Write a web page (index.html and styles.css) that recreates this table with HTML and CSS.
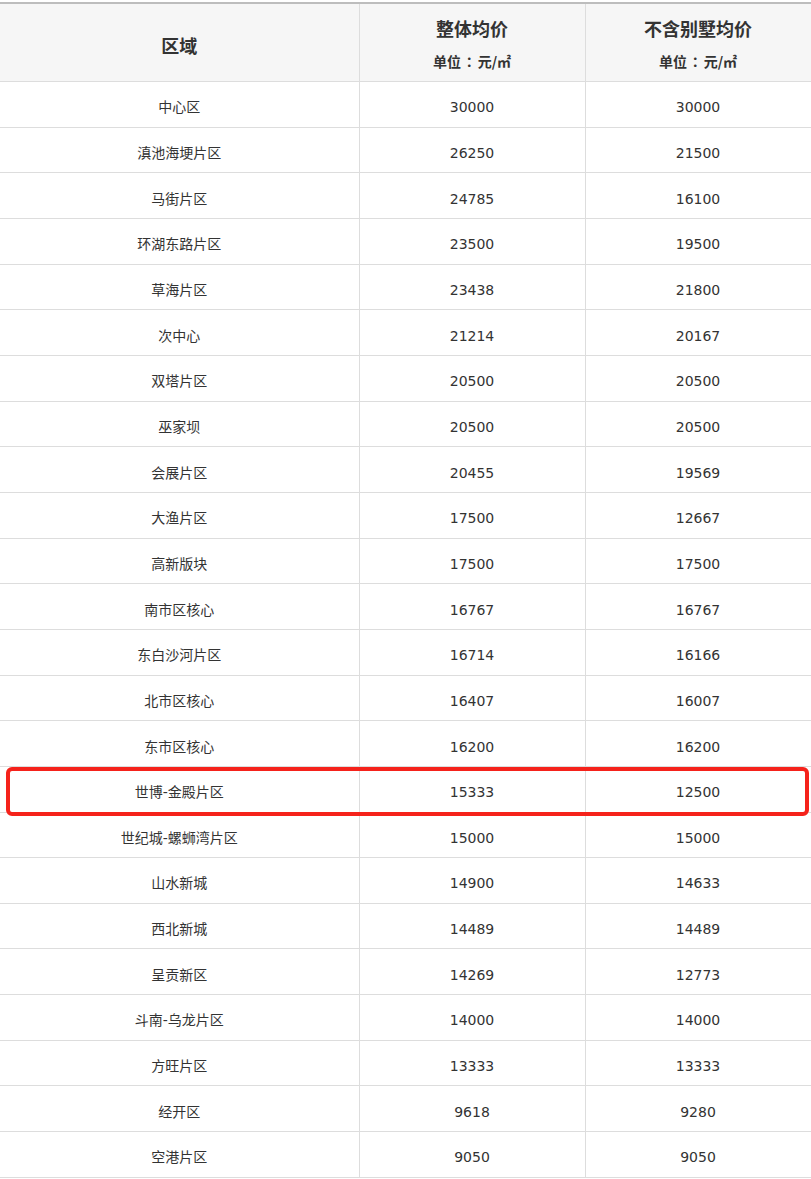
FILE: index.html
```html
<!DOCTYPE html>
<html lang="zh-CN">
<head>
<meta charset="utf-8">
<link rel="stylesheet" href="styles.css">
</head>
<body>
<div class="wrap">
<table class="price">
<colgroup><col class="c1"><col class="c2"><col class="c3"></colgroup>
<thead>
<tr>
<th class="th-area"><span class="h-main">区域</span></th>
<th><div class="h-main">整体均价</div><div class="h-sub">单位<span class="colon" lang="zh-TW">：</span>元/㎡</div></th>
<th><div class="h-main">不含别墅均价</div><div class="h-sub">单位<span class="colon" lang="zh-TW">：</span>元/㎡</div></th>
</tr>
</thead>
<tbody>
<tr><td>中心区</td><td>30000</td><td>30000</td></tr>
<tr><td>滇池海埂片区</td><td>26250</td><td>21500</td></tr>
<tr><td>马街片区</td><td>24785</td><td>16100</td></tr>
<tr><td>环湖东路片区</td><td>23500</td><td>19500</td></tr>
<tr><td>草海片区</td><td>23438</td><td>21800</td></tr>
<tr><td>次中心</td><td>21214</td><td>20167</td></tr>
<tr><td>双塔片区</td><td>20500</td><td>20500</td></tr>
<tr><td>巫家坝</td><td>20500</td><td>20500</td></tr>
<tr><td>会展片区</td><td>20455</td><td>19569</td></tr>
<tr><td>大渔片区</td><td>17500</td><td>12667</td></tr>
<tr><td>高新版块</td><td>17500</td><td>17500</td></tr>
<tr><td>南市区核心</td><td>16767</td><td>16767</td></tr>
<tr><td>东白沙河片区</td><td>16714</td><td>16166</td></tr>
<tr><td>北市区核心</td><td>16407</td><td>16007</td></tr>
<tr><td>东市区核心</td><td>16200</td><td>16200</td></tr>
<tr class="hl"><td><span class="mark"></span>世博-金殿片区</td><td>15333</td><td>12500</td></tr>
<tr><td>世纪城-螺蛳湾片区</td><td>15000</td><td>15000</td></tr>
<tr><td>山水新城</td><td>14900</td><td>14633</td></tr>
<tr><td>西北新城</td><td>14489</td><td>14489</td></tr>
<tr><td>呈贡新区</td><td>14269</td><td>12773</td></tr>
<tr><td>斗南-乌龙片区</td><td>14000</td><td>14000</td></tr>
<tr><td>方旺片区</td><td>13333</td><td>13333</td></tr>
<tr><td>经开区</td><td>9618</td><td>9280</td></tr>
<tr><td>空港片区</td><td>9050</td><td>9050</td></tr>
</tbody>
</table>
</div>
</body>
</html>
```

FILE: styles.css
```css
html, body {
  margin: 0;
  padding: 0;
  background: #fff;
}
.wrap {
  padding-top: 2px;
  width: 811px;
}
.price {
  width: 811px;
  table-layout: fixed;
  border-collapse: collapse;
  border-top: 2px solid #bdbdbd;
  font-family: "DejaVu Sans", "Noto Sans CJK SC", sans-serif;
  color: #333;
}
.c1 { width: 359px; }
.c2 { width: 226px; }
.c3 { width: 226px; }
.price th {
  background: #f6f6f6;
  height: 75px;
  padding: 2px 0 0 0;
  border-right: 1px solid #ddd;
  border-bottom: 1px solid #ddd;
  font-family: "Noto Sans CJK SC", sans-serif;
  font-weight: bold;
  text-align: center;
  vertical-align: middle;
}
.price th.th-area {
  height: 71px;
  padding-top: 6px;
}
.h-main {
  font-size: 18px;
  line-height: 24px;
}
.h-sub {
  font-size: 14px;
  line-height: 20px;
  margin-top: 11px;
}
.colon {
  display: inline-block;
  width: 1.2em;
  text-align: center;
  font-family: "Noto Sans CJK TC", sans-serif;
  text-spacing-trim: space-all;
}
.price td {
  height: 38.667px;
  padding: 6px 0 0 0;
  border-right: 1px solid #ddd;
  border-bottom: 1px solid #ddd;
  text-align: center;
  vertical-align: middle;
  font-size: 14px;
  line-height: 20px;
}
.hl td:first-child {
  position: relative;
}
.mark {
  position: absolute;
  left: 6px;
  top: 0px;
  width: 803px;
  height: 49px;
  box-sizing: border-box;
  border: 4px solid #f5221b;
  border-radius: 6px;
  pointer-events: none;
}
```
